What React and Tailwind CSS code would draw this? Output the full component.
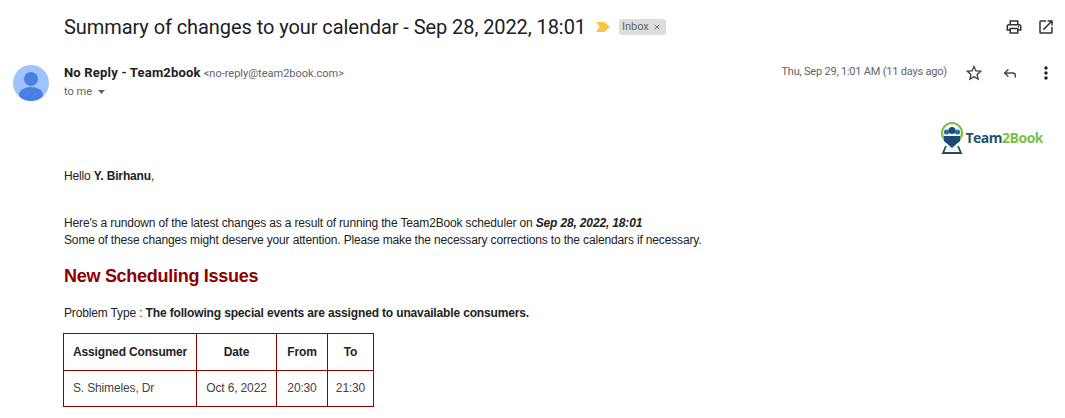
import { X, Reply } from "lucide-react";
import { MdOutlinePrint, MdOpenInNew, MdStarBorder, MdMoreVert } from "react-icons/md";

const cellBorder = "border border-[#8b0000]";

export default function App() {
  return (
    <div className="w-[1065px] h-[418px] overflow-hidden bg-white text-[#222] font-['Roboto',sans-serif]">
      {/* SUBJECT */}
      <div className="flex items-center h-[54px] pl-[64px] pr-[10px]">
        <h1 className="text-[20px] leading-[28px] text-[#202124] tracking-[-0.075px]">
          Summary of changes to your calendar - Sep 28, 2022, 18:01
        </h1>
        <svg className="ml-[10px] w-[14px] h-[10px]" viewBox="0 0 14 10">
          <path d="M0 0H8.5L14 5L8.5 10H0L3.5 5Z" fill="#f6c744" />
        </svg>
        <span className="ml-[9px] flex items-center h-[16px] pl-[3px] pr-[5px] rounded-[3px] bg-[#dddddd] text-[11px] text-[#666]">
          Inbox
          <X className="ml-[4px] w-[8px] h-[8px]" strokeWidth={2.5} />
        </span>
        <div className="ml-auto flex items-center gap-[14px] text-[#333]">
          <MdOutlinePrint size={18} />
          <MdOpenInNew size={18} />
        </div>
      </div>

      {/* SENDER */}
      <div className="flex h-[54px] pl-[13px] pr-[9px] pt-[11px]">
        <svg className="w-[36px] h-[36px] shrink-0" viewBox="0 0 36 36">
          <clipPath id="avatar">
            <circle cx="18" cy="18" r="18" />
          </clipPath>
          <g clipPath="url(#avatar)">
            <rect width="36" height="36" fill="#a0c3ff" />
            <circle cx="18" cy="14" r="7" fill="#4a7fe4" />
            <ellipse cx="18" cy="30" rx="12" ry="8" fill="#4a7fe4" />
          </g>
        </svg>
        <div className="ml-[15px] flex-1">
          <div className="flex items-baseline leading-[18px] mt-[-1px]">
            <span className="text-[13px] font-bold text-[#202124] tracking-[0.2px]">No Reply - Team2book</span>
            <span className="ml-[3px] text-[11px] text-[#5f6368]">&lt;no-reply@team2book.com&gt;</span>
          </div>
          <div className="flex items-center text-[11px] leading-[16px] text-[#5f6368] mt-[1px]">
            to me
            <svg className="ml-[6px] w-[7px] h-[4px]" viewBox="0 0 7 4">
              <path d="M0 0H7L3.5 4Z" fill="#5f6368" />
            </svg>
          </div>
        </div>
        <div className="flex items-start">
          <span className="text-[11px] leading-[16px] mt-[-1px] text-[#5f6368] tracking-[-0.2px]">Thu, Sep 29, 1:01 AM (11 days ago)</span>
          <MdStarBorder size={20} className="ml-[17px] mt-[-2px] text-[#444]" />
          <Reply className="ml-[18px] mt-0 w-[16px] h-[16px] text-[#444]" strokeWidth={2} />
          <MdMoreVert size={20} className="ml-[18px] mt-[-2px] text-[#222]" />
        </div>
      </div>

      {/* LOGO */}
      <div className="flex justify-end items-center h-[32px] mt-[14px] pr-[22px]">
        <svg className="w-[24px] h-[32px]" viewBox="0 0 24 32">
          <path d="M6 19A10 10 0 1 1 18 19" fill="none" stroke="#7cc04b" strokeWidth="2.2" />
          <circle cx="6.5" cy="10" r="2.6" fill="#2b6ea3" />
          <circle cx="17.5" cy="10" r="2.6" fill="#2b6ea3" />
          <circle cx="12" cy="8.5" r="3.6" fill="#1a4a78" />
          <path d="M4 14H20V19L12 26L4 19Z" fill="#1a4a78" />
          <path d="M6 24L3 31H21L18 24" fill="none" stroke="#1f4e5f" strokeWidth="1.8" />
        </svg>
        <span className="ml-[1px] text-[14px] font-bold leading-none font-['Open_Sans',sans-serif] tracking-[-0.5px]">
          <span className="text-[#24566a]">Team</span>
          <span className="text-[#7cc04b]">2Book</span>
        </span>
      </div>

      {/* BODY */}
      <div className="pl-[64px] text-[12px] leading-[17px] font-['Liberation_Sans',sans-serif] text-[#222] tracking-[-0.15px]">
        <p className="mt-[14px]">
          Hello <b>Y. Birhanu</b>,
        </p>
        <p className="mt-[30px]">
          Here's a rundown of the latest changes as a result of running the Team2Book scheduler on{" "}
          <b><i>Sep 28, 2022, 18:01</i></b>
          <br />
          Some of these changes might deserve your attention. Please make the necessary corrections to the calendars if necessary.
        </p>
        <h2 className="mt-[15px] text-[18px] leading-[24px] font-bold text-[#8b0000] tracking-[-0.28px]">New Scheduling Issues</h2>
        <p className="mt-[17px]">
          Problem Type : <b>The following special events are assigned to unavailable consumers.</b>
        </p>
        <table className="mt-[11px] ml-[-1px] border-collapse w-[310px] table-fixed">
          <tbody>
            <tr className="h-[37px]">
              <th className={`${cellBorder} w-[133px] text-left pl-[9px] font-bold`}>Assigned Consumer</th>
              <th className={`${cellBorder} w-[80px] font-bold`}>Date</th>
              <th className={`${cellBorder} w-[51px] font-bold`}>From</th>
              <th className={`${cellBorder} w-[46px] font-bold`}>To</th>
            </tr>
            <tr className="h-[36px] text-[#444]">
              <td className={`${cellBorder} pl-[9px]`}>S. Shimeles, Dr</td>
              <td className={`${cellBorder} text-center`}>Oct 6, 2022</td>
              <td className={`${cellBorder} text-center`}>20:30</td>
              <td className={`${cellBorder} text-center`}>21:30</td>
            </tr>
          </tbody>
        </table>
      </div>
    </div>
  );
}
